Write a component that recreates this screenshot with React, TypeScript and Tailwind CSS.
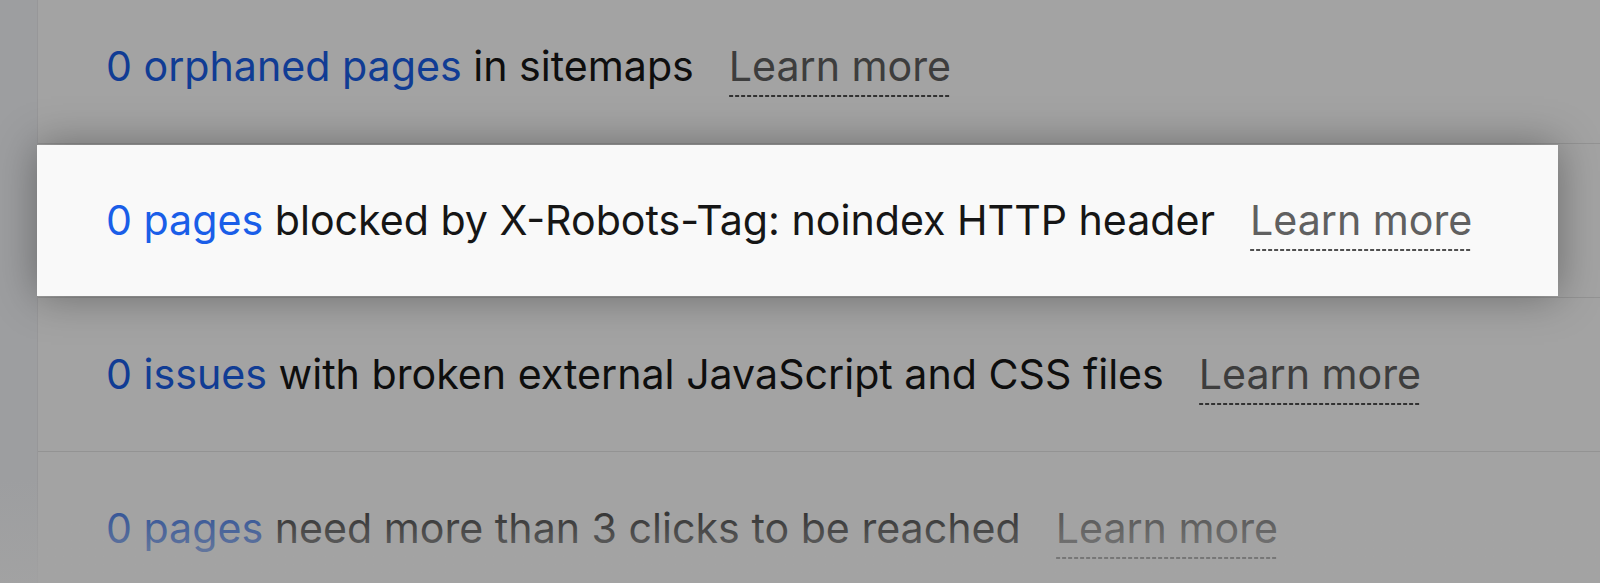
import React from "react";

type Row = { count: string; text: string };

const rows: Row[] = [
  { count: "0 orphaned pages", text: "in sitemaps" },
  { count: "0 pages", text: "blocked by X-Robots-Tag: noindex HTTP header" },
  { count: "0 issues", text: "with broken external JavaScript and CSS files" },
  { count: "0 pages", text: "need more than 3 clicks to be reached" },
];

function Learn() {
  return (
    <span className="ml-[35px] text-[#606060] pb-[6px] bg-[linear-gradient(to_right,#4f4f4f_0,#4f4f4f_4px,transparent_4px)] bg-[length:6px_2px] bg-repeat-x bg-bottom leading-none">
      Learn more
    </span>
  );
}

function Line({ row }: { row: Row }) {
  return (
    <div className="whitespace-nowrap">
      <span className="text-[#1a5ee8]">{row.count}</span>{" "}
      <span className="text-[#161616]">{row.text}</span>
      <Learn />
    </div>
  );
}

export default function App() {
  return (
    <div
      className="relative w-[1600px] h-[583px] overflow-hidden bg-white text-[41.15px]"
      style={{ fontFamily: "Inter, 'Noto Sans', sans-serif" }}
    >
      <div className="flex h-full">
        <div className="w-[38px] shrink-0 bg-[#f6f7fb] border-r border-[#ececef]" />
        <div className="flex-1 flex flex-col -mt-[10px]">
          <div className="h-[154px] shrink-0 border-b border-[#e6e6e6] flex items-center pl-[68px]">
            <Line row={rows[0]} />
          </div>
          <div className="h-[154px] shrink-0 border-b border-[#e6e6e6] flex flex-col">
            <div className="relative z-20 flex-1 mt-[1px] mb-[1px] mr-[42px] bg-[#f9f9f9] shadow-[0_0_40px_rgba(0,0,0,0.35)] flex items-center pl-[69px] -ml-px">
              <Line row={rows[1]} />
            </div>
          </div>
          <div className="h-[154px] shrink-0 border-b border-[#e6e6e6] flex items-center pl-[68px]">
            <Line row={rows[2]} />
          </div>
          <div className="h-[154px] shrink-0 border-b border-[#e6e6e6] flex items-center pl-[68px]">
            <Line row={rows[3]} />
          </div>
        </div>
      </div>
      <div className="absolute inset-0 z-10 bg-black/[0.36]" />
      <div className="absolute left-0 right-0 bottom-0 h-[105px] z-30 bg-linear-to-b from-[#a3a3a3]/0 to-[#a3a3a3]/80" />
    </div>
  );
}
